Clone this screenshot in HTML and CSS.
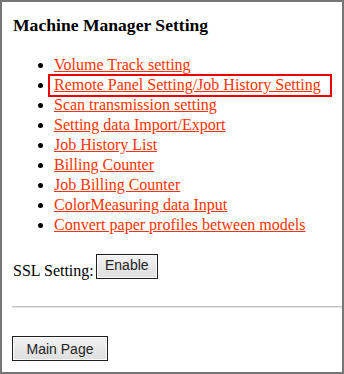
FILE: index.html
```html
<!DOCTYPE html>
<html>
<head>
<meta charset="utf-8">
<link rel="stylesheet" href="styles.css">
</head>
<body>
<div class="frame">
  <h1 class="title">Machine Manager Setting</h1>
  <ul class="menu">
    <li><a href="#">Volume Track setting</a></li>
    <li class="marked"><a href="#">Remote Panel Setting/Job History Setting</a><span class="highlight"></span></li>
    <li><a href="#">Scan transmission setting</a></li>
    <li><a href="#">Setting data Import/Export</a></li>
    <li><a href="#">Job History List</a></li>
    <li><a href="#">Billing Counter</a></li>
    <li><a href="#">Job Billing Counter</a></li>
    <li><a href="#">ColorMeasuring data Input</a></li>
    <li><a href="#">Convert paper profiles between models</a></li>
  </ul>
  <div class="ssl-row">
    <span class="ssl-label">SSL Setting:</span>
    <button class="btn btn-enable" type="button">Enable</button>
  </div>
  <hr class="rule">
  <button class="btn btn-main" type="button">Main Page</button>
</div>
</body>
</html>
```
FILE: styles.css
```css
html, body {
  margin: 0;
  padding: 0;
  background: #fff;
}
.frame {
  width: 344px;
  height: 374px;
  box-sizing: border-box;
  border: 2px solid #767676;
  padding: 0 0 0 10px;
  overflow: hidden;
  display: flex;
  flex-direction: column;
  align-items: flex-start;
  font-family: "Liberation Serif", "Times New Roman", serif;
  color: #000;
}
.title {
  margin: 13px 0 0 1px;
  font-size: 17.6px;
  line-height: 20px;
  font-weight: bold;
}
.menu {
  margin: 20px 0 0 0;
  padding: 0 0 0 42px;
  list-style: disc;
  font-size: 16px;
  line-height: 20px;
}
.menu li {
  position: relative;
}
.menu a {
  color: #ff3300;
  text-decoration: underline;
}
.highlight {
  position: absolute;
  left: -6px;
  top: -1px;
  width: 284px;
  height: 23px;
  box-sizing: border-box;
  border: 2px solid #ee0000;
  pointer-events: none;
}
.ssl-row {
  margin: 19px 0 0 1px;
  display: flex;
  align-items: flex-start;
}
.ssl-label {
  font-size: 16px;
  line-height: 20px;
  margin-top: 7px;
  margin-right: 2px;
}
.btn {
  font-family: "Liberation Sans", Arial, sans-serif;
  font-size: 14px;
  color: #222;
  background: linear-gradient(#f2f2f2, #dedede);
  border: 1px solid #1e1e1e;
  box-shadow: inset 0 0 0 1px #fafafa;
  height: 25px;
  margin: 0;
  box-sizing: border-box;
  border-radius: 0;
}
.btn-enable {
  width: 62px;
  padding: 0 0 3px;
}
.rule {
  align-self: stretch;
  margin: 25px 0 0 0;
  height: 0;
  border: none;
  border-top: 1px solid #c4c4c4;
  border-bottom: 1px solid #e4e4e4;
}
.btn-main {
  margin-top: 28px;
  width: 96px;
  padding: 0;
}
```
